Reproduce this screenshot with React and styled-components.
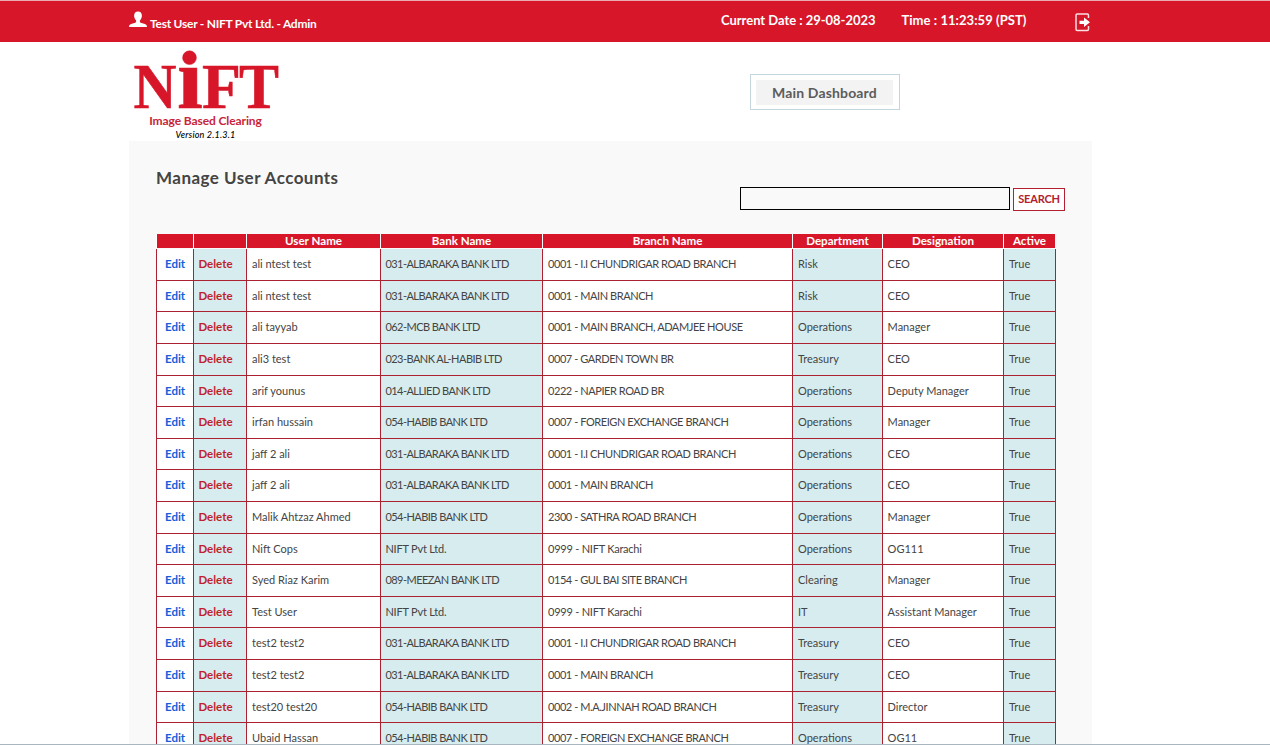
import React from "react";
import styled, { createGlobalStyle } from "styled-components";

const Global = createGlobalStyle`
  * { box-sizing: border-box; }
  html, body { margin: 0; padding: 0; }
  body {
    height: 745px;
    overflow: hidden;
    background: #fff;
    color: #444;
    font-family: Lato, "Liberation Sans", sans-serif;
  }
`;

const Page = styled.div`
  height: 745px;
  overflow: hidden;
  display: flex;
  flex-direction: column;
  border-bottom: 1px solid #a9b5bf;
`;

const TopBar = styled.header`
  flex: none;
  height: 42px;
  background: #d71729;
  border-top: 1px solid #ecaab1;
  color: #fff;
`;

const Container = styled.div`
  width: 963px;
  margin-left: 129px;
  display: flex;
`;

const UserInfo = styled.div`
  width: 592px;
  display: flex;
  gap: 3px;
  padding-top: 10px;
`;

const UserName = styled.span`
  font-weight: 700;
  font-size: 12px;
  letter-spacing: -0.25px;
  line-height: 16px;
  padding-top: 5px;
  white-space: nowrap;
`;

const Clock = styled.div`
  width: 354px;
  display: flex;
  gap: 26px;
  padding-top: 11px;
  font-weight: 700;
  font-size: 13px;
  line-height: 17px;
  white-space: nowrap;
`;

const ClockItem = styled.span`
  letter-spacing: ${(p) => p.$track}px;
`;

const ExitButton = styled.button`
  border: 0;
  padding: 0;
  margin-top: 12px;
  height: 19px;
  background: none;
  svg { display: block; }
`;

const Masthead = styled(Container)`
  flex: none;
  height: 99px;
`;

const Brand = styled.div`
  width: 621px;
  padding: 8px 0 0 4px;
`;

const LogoArt = styled.svg`
  display: block;
  overflow: visible;
  font-family: "Liberation Serif", serif;
  font-weight: 700;
  fill: #d71729;
  stroke: #d71729;
  stroke-width: 0.5px;
`;

const Tagline = styled.div`
  width: 145px;
  text-align: center;
  font-size: 12px;
  font-weight: 700;
  line-height: 15px;
  letter-spacing: -0.1px;
  color: #c9243a;
  margin-top: 3px;
`;

const Version = styled.div`
  width: 145px;
  text-align: center;
  font-size: 9px;
  font-style: italic;
  font-weight: 500;
  letter-spacing: 0.2px;
  color: #000;
  line-height: 14px;
`;

const DashboardFrame = styled.div`
  width: 150px;
  height: 36px;
  margin-top: 32px;
  border: 1px solid #c5d5dd;
  padding: 5px;
`;

const DashboardButton = styled.button`
  display: block;
  width: 137px;
  height: 25px;
  border: 0;
  padding: 0;
  background: #f3f3f3;
  color: #5c5c5c;
  font: 700 14px/26px Lato, sans-serif;
  letter-spacing: 0.15px;
`;

const Panel = styled.main`
  flex: none;
  width: 963px;
  height: 640px;
  margin-left: 129px;
  background: #f9f9f9;
  padding: 27px 27px 0;
`;

const Title = styled.h1`
  margin: 0;
  font-size: 17px;
  line-height: 20px;
  font-weight: 700;
  letter-spacing: 0.46px;
`;

const SearchRow = styled.form`
  height: 24px;
  margin-top: -1px;
  display: flex;
  justify-content: flex-end;
  gap: 3px;
`;

const SearchInput = styled.input`
  width: 270px;
  height: 23px;
  border: 1px solid #000;
  background: transparent;
`;

const SearchButton = styled.button`
  width: 52px;
  height: 23px;
  margin-top: 1px;
  padding: 0 0 2px;
  border: 1px solid #b3202f;
  background: #fff;
  color: #b3202f;
  font: 700 11px/19px Lato, sans-serif;
  letter-spacing: -0.2px;
`;

const Grid = styled.div`
  width: 900px;
  margin-top: 23px;
`;

const columns = "37px 53px 134px 162px 250px 90px 121px 52px";

const HeadRow = styled.div`
  display: grid;
  grid-template-columns: ${columns};
  height: 15.2px;
`;

const HeadCell = styled.div`
  height: 14px;
  background: #d71729;
  border-left: 1px solid #fff;
  color: #fff;
  font-size: 11.6px;
  font-weight: 700;
  line-height: 14px;
  text-align: center;
`;

const Row = styled.div`
  display: grid;
  grid-template-columns: ${columns};
  height: 31.6px;
  border-right: 1px solid #ac212f;
`;

const Cell = styled.div`
  border-left: 1px solid #ac212f;
  border-bottom: 1px solid #ac212f;
  background: ${(p) => (p.$tint ? "#d6ecee" : "#fff")};
  padding-left: ${(p) => p.$pad ?? 5}px;
  font-size: 11px;
  line-height: 30px;
  letter-spacing: ${(p) => p.$track || 0}px;
  white-space: nowrap;
`;

const Action = styled.a`
  color: ${(p) => p.$color};
  font-size: 11.5px;
  font-weight: 700;
`;

const headings = ["", "", "User Name", "Bank Name", "Branch Name", "Department", "Designation", "Active"];

const users = [
  ["ali ntest test", "031-ALBARAKA BANK LTD", "0001 - I.I CHUNDRIGAR ROAD BRANCH", "Risk", "CEO"],
  ["ali ntest test", "031-ALBARAKA BANK LTD", "0001 - MAIN BRANCH", "Risk", "CEO"],
  ["ali tayyab", "062-MCB BANK LTD", "0001 - MAIN BRANCH, ADAMJEE HOUSE", "Operations", "Manager"],
  ["ali3 test", "023-BANK AL-HABIB LTD", "0007 - GARDEN TOWN BR", "Treasury", "CEO"],
  ["arif younus", "014-ALLIED BANK LTD", "0222 - NAPIER ROAD BR", "Operations", "Deputy Manager"],
  ["irfan hussain", "054-HABIB BANK LTD", "0007 - FOREIGN EXCHANGE BRANCH", "Operations", "Manager"],
  ["jaff 2 ali", "031-ALBARAKA BANK LTD", "0001 - I.I CHUNDRIGAR ROAD BRANCH", "Operations", "CEO"],
  ["jaff 2 ali", "031-ALBARAKA BANK LTD", "0001 - MAIN BRANCH", "Operations", "CEO"],
  ["Malik Ahtzaz Ahmed", "054-HABIB BANK LTD", "2300 - SATHRA ROAD BRANCH", "Operations", "Manager"],
  ["Nift Cops", "NIFT Pvt Ltd.", "0999 - NIFT Karachi", "Operations", "OG111"],
  ["Syed Riaz Karim", "089-MEEZAN BANK LTD", "0154 - GUL BAI SITE BRANCH", "Clearing", "Manager"],
  ["Test User", "NIFT Pvt Ltd.", "0999 - NIFT Karachi", "IT", "Assistant Manager"],
  ["test2 test2", "031-ALBARAKA BANK LTD", "0001 - I.I CHUNDRIGAR ROAD BRANCH", "Treasury", "CEO"],
  ["test2 test2", "031-ALBARAKA BANK LTD", "0001 - MAIN BRANCH", "Treasury", "CEO"],
  ["test20 test20", "054-HABIB BANK LTD", "0002 - M.A.JINNAH ROAD BRANCH", "Treasury", "Director"],
  ["Ubaid Hassan", "054-HABIB BANK LTD", "0007 - FOREIGN EXCHANGE BRANCH", "Operations", "OG11"],
];

// All-capital bank and branch names are set tighter than mixed-case ones.
const bankTrack = (v) => (/[a-z]/.test(v) ? -0.2 : -0.54);
const branchTrack = (v) => (/[a-z]/.test(v) ? -0.23 : -0.43);

function PersonIcon() {
  return (
    <svg width="18" height="17" viewBox="0 0 18 17" fill="#fff">
      <path d="M9 .5c2.400 0 3.900 1.600 3.900 4.100 0 2-.8 3.800-2 4.800v1.400c0 .5.3.8.8 1l4.200 1.300c1.300.4 2 1.200 2.100 2.900H0c.1-1.700.8-2.500 2.100-2.900l4.200-1.300c.5-.2.8-.5.8-1V9.400c-1.200-1-2-2.800-2-4.800C5.100 2.100 6.600.5 9 .5z" />
    </svg>
  );
}

function ExitIcon() {
  return (
    <svg width="16" height="19" viewBox="0 0 16 19" fill="none">
      <path d="M13.500 5V2.200Q13.500 1 12.300 1H2.200Q1 1 1 2.200V16.300Q1 17.500 2.200 17.500H12.300Q13.500 17.500 13.500 16.300V13" stroke="#fbe0e2" strokeWidth="1.500" />
      <path d="M4.500 7.700H9V4.500L15 9.200 9 14V10.900H4.500z" fill="#fff" />
    </svg>
  );
}

function Logo() {
  return (
    <LogoArt width="146" height="60" viewBox="0 0 146 60">
      <circle cx="56.500" cy="7.700" r="6.900" />
      <text x="0.500" y="57.700" fontSize="63" textLength="43" lengthAdjust="spacingAndGlyphs">N</text>
      <text x="44" y="57.700" fontSize="87" textLength="26" lengthAdjust="spacingAndGlyphs">ı</text>
      <text x="69" y="57.700" fontSize="63" textLength="39" lengthAdjust="spacingAndGlyphs">F</text>
      <text x="106" y="57.700" fontSize="63" textLength="40" lengthAdjust="spacingAndGlyphs">T</text>
    </LogoArt>
  );
}

export default function App() {
  return (
    <>
      <Global />
      <Page>
        <TopBar>
          <Container>
            <UserInfo>
              <PersonIcon />
              <UserName>Test User - NIFT Pvt Ltd. - Admin</UserName>
            </UserInfo>
            <Clock>
              <ClockItem $track={-0.03}>Current Date : 29-08-2023</ClockItem>
              <ClockItem $track={0.06}>Time : 11:23:59 (PST)</ClockItem>
            </Clock>
            <ExitButton aria-label="Log out"><ExitIcon /></ExitButton>
          </Container>
        </TopBar>
        <Masthead>
          <Brand>
            <Logo />
            <Tagline>Image Based Clearing</Tagline>
            <Version>Version 2.1.3.1</Version>
          </Brand>
          <DashboardFrame>
            <DashboardButton>Main Dashboard</DashboardButton>
          </DashboardFrame>
        </Masthead>
        <Panel>
          <Title>Manage User Accounts</Title>
          <SearchRow>
            <SearchInput aria-label="Search" />
            <SearchButton type="button">SEARCH</SearchButton>
          </SearchRow>
          <Grid>
            <HeadRow>
              {headings.map((h, i) => <HeadCell key={i}>{h}</HeadCell>)}
            </HeadRow>
            {users.map(([name, bank, branch, department, designation], i) => (
              <Row key={i}>
                <Cell $pad={8}><Action $color="#1560d8">Edit</Action></Cell>
                <Cell $tint $pad={4.4}><Action $color="#c01f30">Delete</Action></Cell>
                <Cell>{name}</Cell>
                <Cell $tint $pad={4.4} $track={bankTrack(bank)}>{bank}</Cell>
                <Cell $track={branchTrack(branch)}>{branch}</Cell>
                <Cell $tint>{department}</Cell>
                <Cell $pad={4.6}>{designation}</Cell>
                <Cell $tint>True</Cell>
              </Row>
            ))}
          </Grid>
        </Panel>
      </Page>
    </>
  );
}
